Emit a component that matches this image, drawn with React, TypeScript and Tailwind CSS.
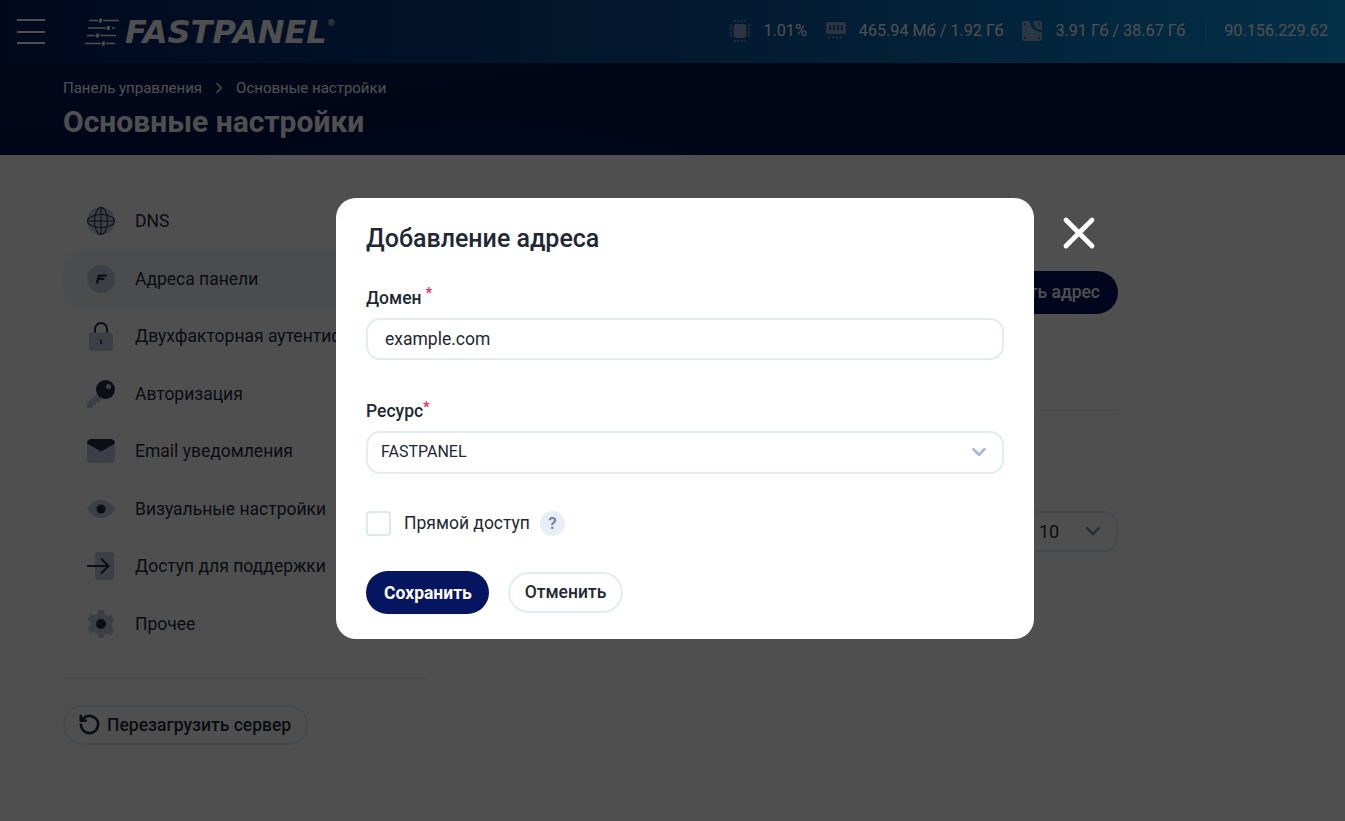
import { ChevronDown, ChevronRight, RotateCw, X } from 'lucide-react'
import type { ReactNode } from 'react'

const ICON_LIGHT = '#c3cde2'
const ICON_DARK = '#2a2e3e'

function GlobeIcon() {
  return (
    <svg width="28" height="28" viewBox="0 0 28 28" fill="none">
      <circle cx="14" cy="14" r="14" fill={ICON_LIGHT} />
      <g stroke={ICON_DARK} strokeWidth="1.100">
        <ellipse cx="14" cy="14" rx="6.500" ry="13.500" />
        <ellipse cx="14" cy="14" rx="13.500" ry="6.500" />
        <path d="M14 .5v27M.5 14h27" />
      </g>
    </svg>
  )
}

function PanelIcon() {
  return (
    <svg width="28" height="28" viewBox="0 0 28 28" fill="none">
      <circle cx="14" cy="14" r="14" fill={ICON_LIGHT} />
      <path d="M11 9.500h9l-.7 2.200h-6.200l-.3 1h5l-.7 2.200h-5l-.9 3.600H8.800z" fill={ICON_DARK} />
    </svg>
  )
}

function LockIcon() {
  return (
    <svg width="28" height="30" viewBox="0 0 28 30" fill="none">
      <path d="M8 13V8a6 6 0 0 1 12 0v5" stroke={ICON_DARK} strokeWidth="2" />
      <rect x="2" y="11.500" width="24" height="18.500" rx="3.500" fill={ICON_LIGHT} />
      <rect x="13.200" y="18.500" width="1.600" height="4.500" fill={ICON_DARK} />
    </svg>
  )
}

function KeyIcon() {
  return (
    <svg width="28" height="28" viewBox="0 0 28 28" fill="none">
      <path d="M12 12 0 23v5h6v-3h3v-3h3l5-5z" fill={ICON_LIGHT} />
      <circle cx="18.500" cy="9.500" r="9.500" fill={ICON_DARK} />
      <circle cx="21.500" cy="6.500" r="2.600" fill={ICON_LIGHT} />
    </svg>
  )
}

function MailIcon() {
  return (
    <svg width="28" height="24" viewBox="0 0 28 24" fill="none">
      <rect y="1" width="28" height="23" rx="4" fill={ICON_LIGHT} />
      <path d="M0 4.500A4.500 4.500 0 0 1 4.500 0h19A4.500 4.500 0 0 1 28 4.500L14 12.500z" fill={ICON_DARK} />
    </svg>
  )
}

function EyeIcon() {
  return (
    <svg width="28" height="18" viewBox="0 0 28 18" fill="none">
      <path d="M0 9C3.500 3.500 8.500 0 14 0s10.500 3.500 14 9c-3.500 5.500-8.500 9-14 9S3.500 14.500 0 9z" fill={ICON_LIGHT} />
      <circle cx="14" cy="9" r="4.500" fill={ICON_DARK} />
    </svg>
  )
}

function EnterIcon() {
  return (
    <svg width="28" height="28" viewBox="0 0 28 28" fill="none">
      <rect x="8" width="19" height="28" rx="3.500" fill={ICON_LIGHT} />
      <path d="M0 14h21M14 6.500l7.500 7.500-7.500 7.500" stroke={ICON_DARK} strokeWidth="2" />
    </svg>
  )
}

function GearIcon() {
  return (
    <svg width="28" height="28" viewBox="0 0 28 28" fill="none">
      <path
        d="M11 0h6l1 4 3.500 2 4-1.200 3 5.200-3 2.900v4.200l3 2.900-3 5.200-4-1.200L18 24l-1 4h-6l-1-4-3.500-2-4 1.200-3-5.200 3-2.900V11.900L-.5 9l3-5.200 4 1.200L10 4z"
        fill={ICON_LIGHT}
        transform="translate(1 0) scale(.93 1)"
      />
      <circle cx="14" cy="14" r="5" fill={ICON_DARK} />
    </svg>
  )
}

function LogoMark() {
  return (
    <svg width="34" height="28" viewBox="0 0 34 28" fill="#fff">
      <g stroke="#fff" strokeWidth="1.600">
        <path d="M4 2.500h9M18 2.500h16" />
        <path d="M3 10h18M27 10h3" />
        <path d="M2 17.500h8M15 17.500h16" />
        <path d="M0 25.500h16M21 25.500h9" />
      </g>
      <path d="M14.300.5h3l-.7 4h-3zM22.300 8h3l-.7 4h-3zM11.300 15.500h3l-.7 4h-3zM17.300 23.500h3l-.7 4h-3z" />
    </svg>
  )
}

function CpuIcon() {
  return (
    <svg width="20" height="22" viewBox="0 0 20 22" fill="none" opacity=".7">
      <rect x="3.500" y="4" width="13" height="14" rx="3" fill={ICON_LIGHT} />
      <g stroke={ICON_LIGHT} strokeWidth="1.500" strokeDasharray="2 1.500">
        <path d="M4 1h12M4 21h12M.8 4.500v13M19.200 4.500v13" />
      </g>
    </svg>
  )
}

function RamIcon() {
  return (
    <svg width="20" height="18" viewBox="0 0 20 18" fill="none" opacity=".7">
      <path d="M2 0h16a2 2 0 0 1 2 2v10H0V2a2 2 0 0 1 2-2z" fill={ICON_LIGHT} />
      <path d="M4 3v5M8 3v5M12 3v5M16 3v5" stroke="#2a6a9c" strokeWidth="2" />
      <path d="M2 15.500h16" stroke={ICON_LIGHT} strokeWidth="1.500" strokeDasharray="2 2" />
    </svg>
  )
}

function DiskIcon() {
  return (
    <svg width="20" height="20" viewBox="0 0 20 20" fill="none" opacity=".7">
      <path d="M2 0h6c0 6 5 11 12 11v7a2 2 0 0 1-2 2H2a2 2 0 0 1-2-2V2a2 2 0 0 1 2-2z" fill={ICON_LIGHT} />
      <path d="M11 0h7a2 2 0 0 1 2 2v7c-5 0-9-4-9-9z" fill={ICON_LIGHT} />
      <g fill="#0a5a90">
        <circle cx="3" cy="3" r="1" />
        <circle cx="17" cy="3" r="1" />
        <circle cx="3" cy="17" r="1" />
        <circle cx="17" cy="17" r="1" />
      </g>
    </svg>
  )
}

const NAV: { label: string; icon: ReactNode; active?: boolean }[] = [
  { label: 'DNS', icon: <GlobeIcon /> },
  { label: 'Адреса панели', icon: <PanelIcon />, active: true },
  { label: 'Двухфакторная аутентификация', icon: <LockIcon /> },
  { label: 'Авторизация', icon: <KeyIcon /> },
  { label: 'Email уведомления', icon: <MailIcon /> },
  { label: 'Визуальные настройки', icon: <EyeIcon /> },
  { label: 'Доступ для поддержки', icon: <EnterIcon /> },
  { label: 'Прочее', icon: <GearIcon /> },
]

function Stat({ icon, text }: { icon: ReactNode; text: string }) {
  return (
    <div className="flex items-center gap-[13px]">
      {icon}
      <span className="text-[16.200px] text-white">{text}</span>
    </div>
  )
}

function Header() {
  return (
    <header className="flex h-[63px] items-center justify-between bg-gradient-to-r from-[#061c62] via-[#0a4f96] to-[#0a9ae6] pl-[17px] pr-[17px]">
      <div className="flex items-center">
        <div className="flex w-[28px] flex-col gap-[9.500px]">
          <span className="h-[2px] bg-white" />
          <span className="h-[2px] bg-white" />
          <span className="h-[2px] bg-white" />
        </div>
        <div className="ml-[40px] flex items-center gap-[6px]">
          <LogoMark />
          <span className="font-['DejaVu_Sans',sans-serif] text-[32px] font-bold italic leading-none text-white">FASTPANEL</span>
          <span className="-ml-[5px] -mt-[16px] text-[9px] text-white">®</span>
        </div>
      </div>
      <div className="flex items-center">
        <div className="flex items-center gap-[19px]">
          <Stat icon={<CpuIcon />} text="1.01%" />
          <Stat icon={<RamIcon />} text="465.94 Мб / 1.92 Гб" />
          <Stat icon={<DiskIcon />} text="3.91 Гб / 38.67 Гб" />
        </div>
        <div className="ml-[20px] flex h-[30px] items-center border-l border-white/20 pl-[18px] text-[16.200px] text-white">
          90.156.229.62
        </div>
      </div>
    </header>
  )
}

function PageTitle() {
  return (
    <div className="relative h-[92px] overflow-hidden bg-[#00114f] pl-[63px]">
      <svg className="absolute inset-0 h-full w-full" viewBox="0 0 1345 92" preserveAspectRatio="none" fill="none">
        <path d="M0 0h620C560 2 520 8 480 15 400 30 340 38 280 47 220 57 180 66 120 66 70 66 30 64 0 62z" fill="#081b55" />
        <path d="M260 92C340 72 420 60 480 60c60 0 120 12 220 32z" fill="#051a5c" />
      </svg>
      <div className="relative pt-[16px]">
        <div className="flex items-center text-[15px] leading-[18px] text-white">
          <span>Панель управления</span>
          <ChevronRight className="mx-[8px] h-[18px] w-[18px]" strokeWidth={1.800} />
          <span>Основные настройки</span>
        </div>
        <h1 className="mt-[6px] text-[30px] font-bold leading-[38px] text-white">Основные настройки</h1>
      </div>
    </div>
  )
}

function Sidebar() {
  return (
    <aside className="ml-[63px] w-[367px] shrink-0 pt-[37.700px]">
      {NAV.map(item => (
        <div
          key={item.label}
          className={`flex h-[57.500px] items-center rounded-[18px] pl-[24px] ${item.active ? 'bg-[#f2f5fa]' : ''}`}
        >
          <span className="flex w-[28px] justify-center">{item.icon}</span>
          <span className="ml-[20px] whitespace-nowrap text-[17.500px] text-[#252c3b]">{item.label}</span>
        </div>
      ))}
      <div className="mt-[25.300px] border-t border-[#dde4ee]" />
      <button className="mt-[26px] flex h-[40px] items-center gap-[6px] rounded-full border-2 border-[#e3ebf6] pl-[13px] pr-[15px] text-[17.500px] font-medium text-[#252c3b]">
        <RotateCw className="h-[23px] w-[23px] -scale-x-100" strokeWidth={2.800} />
        Перезагрузить сервер
      </button>
    </aside>
  )
}

function MainArea() {
  return (
    <main className="ml-[60px] mr-[227px] flex-1 pt-[116px]">
      <div className="flex justify-end">
        <button className="h-[43px] rounded-full bg-[#051560] px-[18px] text-[17.500px] font-medium text-white">
          Добавить адрес
        </button>
      </div>
      <div className="mt-[96px] border-t border-[#e3e8f0]" />
      <div className="mt-[100px] flex justify-end">
        <div className="flex h-[41px] w-[120px] items-center justify-between rounded-[14px] border-2 border-[#e3ebf6] pb-[1px] pl-[39px] pr-[11px] text-[18px] text-[#252c3b]">
          10
          <ChevronDown className="h-[24px] w-[24px] text-[#8d99b5]" strokeWidth={2.500} />
        </div>
      </div>
    </main>
  )
}

function Modal() {
  return (
    <div className="absolute inset-0 bg-[#000000b0]">
      <div className="absolute left-[336px] top-[198px] h-[441px] w-[698px] rounded-[20px] bg-white px-[30px] pt-[25px] text-[#212833]">
        <h2 className="text-[25px] font-medium leading-[32px]">Добавление адреса</h2>

        <div className="mt-[31px] flex h-[24px] items-center text-[17.500px] font-medium">
          Домен
          <span className="-mt-[10px] ml-[4px] text-[15px] text-[#f0245e]">*</span>
        </div>
        <div className="mt-[8px] flex h-[42px] items-center rounded-[14px] border-2 border-[#e3ebf6] pl-[17px] text-[17.500px]">
          example.com
        </div>

        <div className="mt-[39px] flex h-[24px] items-center text-[17.500px] font-medium">
          Ресурс
          <span className="-mt-[8px] text-[15px] text-[#f0245e]">*</span>
        </div>
        <div className="mt-[8px] flex h-[43px] items-center justify-between rounded-[14px] border-2 border-[#e3ebf6] pb-[1px] pl-[13px] pr-[12px] text-[16px]">
          FASTPANEL
          <ChevronDown className="h-[22px] w-[22px] text-[#aab8d6]" strokeWidth={3} />
        </div>

        <div className="mt-[37px] flex h-[25px] items-center">
          <span className="h-[25px] w-[25px] rounded-[4px] border-2 border-[#dfe7f2]" />
          <span className="ml-[13px] text-[17.500px]">Прямой доступ</span>
          <span className="ml-[10px] flex h-[25px] w-[25px] items-center justify-center rounded-full bg-[#e8eef7] text-[17px] font-bold text-[#7b8499]">
            ?
          </span>
        </div>

        <div className="mt-[35px] flex items-center gap-[19px]">
          <button className="h-[43px] w-[123px] rounded-full bg-[#051560] pl-[1px] pt-[1px] text-[17.500px] font-bold text-white">
            Сохранить
          </button>
          <button className="h-[41px] w-[115px] rounded-full border-2 border-[#e3ebf6] text-[17.500px] font-medium">
            Отменить
          </button>
        </div>
      </div>
      <button className="absolute left-[1053px] top-[207px] text-white">
        <X className="h-[52px] w-[52px]" strokeWidth={2.200} />
      </button>
    </div>
  )
}

export default function App() {
  return (
    <div className="relative h-[821px] overflow-hidden bg-white font-['Roboto',sans-serif]">
      <Header />
      <PageTitle />
      <div className="flex">
        <Sidebar />
        <MainArea />
      </div>
      <Modal />
    </div>
  )
}
